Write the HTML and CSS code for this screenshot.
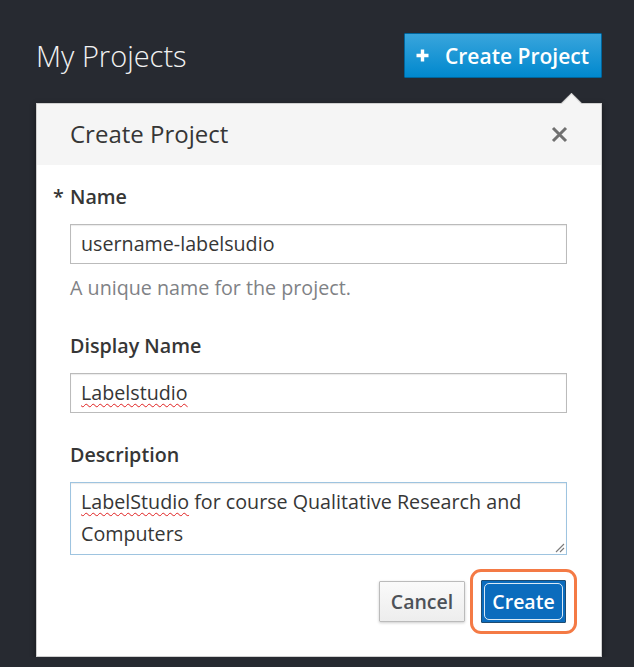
FILE: index.html
```html
<!DOCTYPE html>
<html lang="en">
<head>
<meta charset="utf-8">
<title>My Projects</title>
<link rel="stylesheet" href="styles.css">
</head>
<body>
  <header class="page-header">
    <h1 class="page-title">My Projects</h1>
    <button class="btn-create-project">
      <svg class="plus" width="13" height="13" viewBox="0 0 13 13"><path d="M6.5 0.5v12M0.5 6.5h12" stroke="#fff" stroke-width="3.4"/></svg>
      <span>Create Project</span>
    </button>
  </header>

  <section class="panel">
    <div class="panel-heading">
      <h2 class="panel-title">Create Project</h2>
      <svg class="close" width="17" height="17" viewBox="0 0 17 17"><path d="M2 2L15 15M15 2L2 15" stroke="#707070" stroke-width="3"/></svg>
    </div>
    <div class="panel-body">
      <div class="form-group">
        <div class="control-label"><span class="req">*</span>Name</div>
        <div class="form-control">username-labelsudio</div>
        <div class="help-block">A unique name for the project.</div>
      </div>
      <div class="form-group">
        <div class="control-label">Display Name</div>
        <div class="form-control"><span class="misspelled">Labelstudio</span></div>
      </div>
      <div class="form-group last">
        <div class="control-label">Description</div>
        <div class="form-control textarea"><span class="misspelled">LabelStudio</span> for course Qualitative Research and Computers
          <svg class="grip" width="10" height="10" viewBox="0 0 10 10"><path d="M9 1L1 9M9 5L5 9" stroke="#7a7a7a" stroke-width="1.1"/></svg>
        </div>
      </div>
    </div>
    <div class="panel-footer">
      <button class="btn btn-default">Cancel</button>
      <span class="highlight"><button class="btn btn-primary">Create</button></span>
    </div>
  </section>
</body>
</html>
```
FILE: styles.css
```css
* { box-sizing: border-box; }

body {
  margin: 0;
  background: #272a31;
  font-family: "Open Sans", "DejaVu Sans", sans-serif;
  font-size: 19.7px;
  line-height: 32.5px;
  color: #363636;
}

.page-header {
  display: flex;
  align-items: center;
  justify-content: space-between;
  padding: 33px 32px 0 36px;
}

.page-title {
  margin: 0;
  font-size: 29px;
  font-weight: 300;
  line-height: 45px;
  color: #f2f2f2;
}

.btn-create-project {
  display: flex;
  align-items: center;
  gap: 16px;
  height: 45px;
  width: 198px;
  padding: 0 0 0 11px;
  border: 1px solid #00659c;
  border-radius: 1px;
  background: linear-gradient(#39a5dc, #0088ce);
  color: #fff;
  font-family: "Open Sans", sans-serif;
  font-size: 21px;
  font-weight: 600;
}

.panel {
  position: relative;
  margin: 25px 32px 0 36px;
  background: #fff;
  border: 1px solid #cfcfcf;
  box-shadow: 0 2px 6px rgba(0, 0, 0, 0.45);
}

.panel::before {
  content: "";
  position: absolute;
  top: -8px;
  right: 22px;
  width: 14px;
  height: 14px;
  background: #f5f5f5;
  border-top: 1px solid #cfcfcf;
  border-left: 1px solid #cfcfcf;
  transform: rotate(45deg);
}

.panel-heading {
  position: relative;
  display: flex;
  align-items: center;
  justify-content: space-between;
  height: 61px;
  padding: 0 33px 0 33px;
  background: #f5f5f5;
}

.panel-title {
  margin: 0;
  font-size: 24px;
  font-weight: 400;
  color: #363636;
}

.panel-body {
  padding: 16px 34px 0 33px;
}

.form-group { margin-bottom: 25.5px; }
.form-group.last { margin-bottom: 0; }

.control-label {
  font-weight: 600;
  margin-bottom: 10.5px;
}

.req {
  display: inline-block;
  width: 17px;
  margin-left: -17px;
}

.form-control {
  height: 40px;
  padding: 0 10px;
  border: 1px solid #bbbbbb;
  box-shadow: inset 0 1px 1px rgba(3, 3, 3, 0.08);
  line-height: 38px;
  color: #363636;
  background: #fff;
}

.form-control.textarea {
  position: relative;
  height: 73px;
  padding: 3px 10px;
  line-height: 32.5px;
  border-color: #9ec4e0;
}

.grip {
  position: absolute;
  right: 1px;
  bottom: 1px;
}

.misspelled {
  text-decoration: underline wavy #e02020;
  text-decoration-thickness: 1px;
  text-underline-offset: 3px;
}

.help-block {
  margin-top: 8px;
  color: #7f8286;
}

.panel-footer {
  display: flex;
  justify-content: flex-end;
  align-items: center;
  padding: 14px 24px 22px 0;
}

.btn {
  height: 41px;
  font-family: "Open Sans", sans-serif;
  font-size: 19.5px;
  font-weight: 600;
  border-radius: 1px;
}

.btn-default {
  width: 86px;
  margin-right: 5px;
  border: 1px solid #bbbbbb;
  background: linear-gradient(#fafafa, #ededed);
  color: #4d5258;
  box-shadow: 0 1px 3px rgba(0, 0, 0, 0.2);
}

.highlight {
  display: flex;
  padding: 8px;
  border: 3px solid #f47a45;
  border-radius: 11px;
}

.btn-primary {
  position: relative;
  width: 85px;
  height: 43px;
  border: 1px solid #1e4c72;
  background: #0b6cbd;
  color: #fff;
}

.btn-primary::after {
  content: "";
  position: absolute;
  inset: 2px;
  border: 1.5px solid rgba(255, 255, 255, 0.85);
  border-radius: 5px;
}
```
